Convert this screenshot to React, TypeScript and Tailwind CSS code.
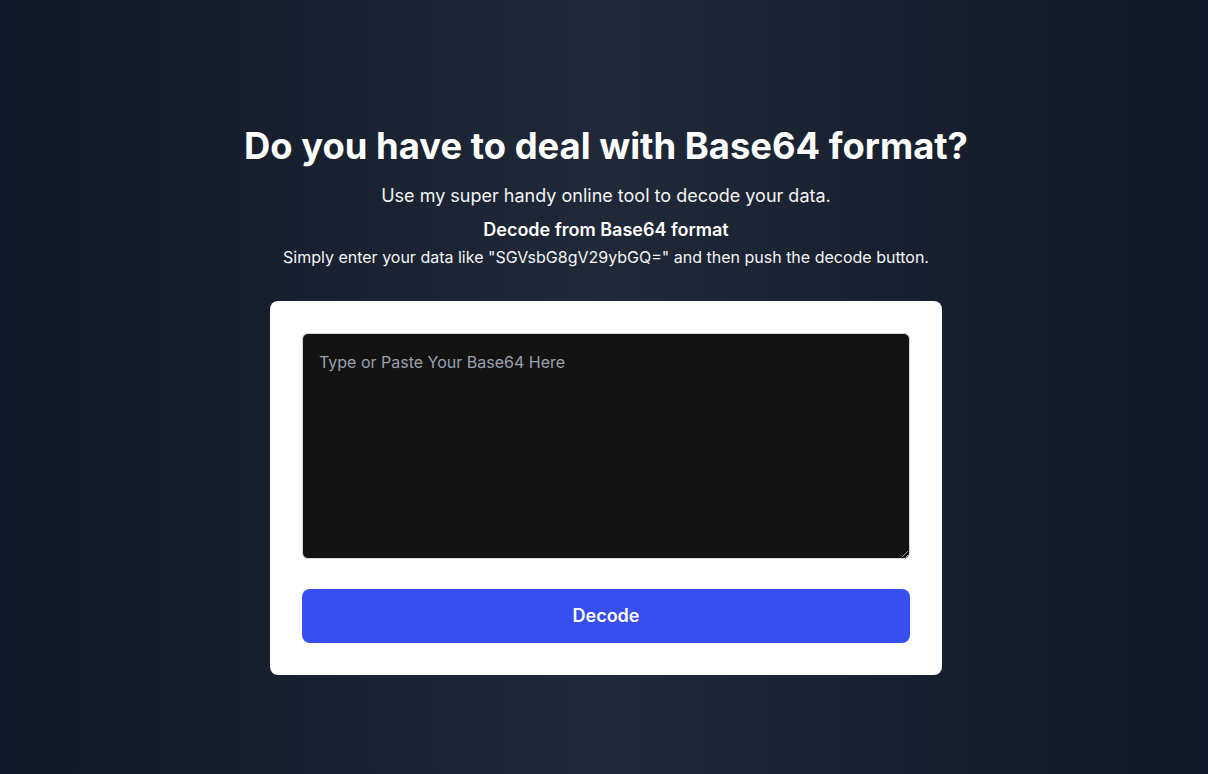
import { useState } from 'react';

export default function App() {
  const [input, setInput] = useState('');

  return (
    <div
      className="min-h-screen w-full bg-gradient-to-r from-[#111827] via-[#1f2937] to-[#111827] flex flex-col items-center pt-[126px] pl-[4px] text-white"
      style={{ fontFamily: 'Inter, "Noto Sans", sans-serif' }}
    >
      <h1 className="text-[36.4px] leading-10 font-bold">Do you have to deal with Base64 format?</h1>
      <p className="mt-4 text-lg leading-7 text-gray-100">Use my super handy online tool to decode your data.</p>
      <h2 className="mt-[6px] text-lg leading-7 font-semibold">Decode from Base64 format</h2>
      <p className="mt-[1px] text-base leading-6 text-gray-100">
        Simply enter your data like "SGVsbG8gV29ybGQ=" and then push the decode button.
      </p>

      <div className="mt-[32px] w-[672px] bg-white rounded-lg p-8">
        <textarea
          value={input}
          onChange={(e) => setInput(e.target.value)}
          placeholder="Type or Paste Your Base64 Here"
          className="block w-full h-[226px] bg-[#131313] text-white rounded-md border border-gray-300 px-4 py-[16px] text-base leading-6 placeholder:text-gray-400 outline-none"
        />
        <button className="mt-[30px] w-full h-[54px] rounded-lg bg-[#384ff0] text-white text-lg font-semibold">
          Decode
        </button>
      </div>
    </div>
  );
}
